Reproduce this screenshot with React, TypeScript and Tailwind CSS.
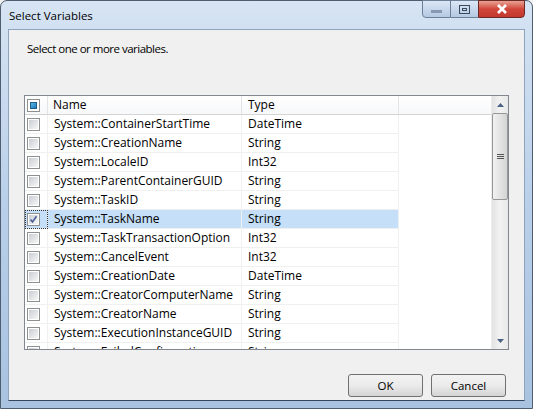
import React from 'react'

const ROWS: [string, string][] = [
  ['System::ContainerStartTime', 'DateTime'],
  ['System::CreationName', 'String'],
  ['System::LocaleID', 'Int32'],
  ['System::ParentContainerGUID', 'String'],
  ['System::TaskID', 'String'],
  ['System::TaskName', 'String'],
  ['System::TaskTransactionOption', 'Int32'],
  ['System::CancelEvent', 'Int32'],
  ['System::CreationDate', 'DateTime'],
  ['System::CreatorComputerName', 'String'],
  ['System::CreatorName', 'String'],
  ['System::ExecutionInstanceGUID', 'String'],
  ['System::FailedConfigurations', 'String'],
]

const FONT = { fontFamily: '"Open Sans", "Liberation Sans", Arial, sans-serif' }

function Check({ checked, mixed }: { checked?: boolean; mixed?: boolean }) {
  return (
    <div className="w-[13px] h-[13px] border border-[#8e8f8f] bg-white p-[1px] flex">
      {mixed ? (
        <div className="flex-1 border border-[#1d5f8a] bg-gradient-to-br from-[#5ab8e6] to-[#1b7ab8] m-[1px]" />
      ) : (
        <div className="flex-1 bg-gradient-to-br from-[#c9cdd3] to-[#f7f7f7] relative">
          {checked && (
            <svg viewBox="0 0 9 9" className="absolute inset-0 w-full h-full">
              <path d="M1.5 4.5 L3.5 7 L7.5 1.2" fill="none" stroke="#4a5f97" strokeWidth="1.6" />
            </svg>
          )}
        </div>
      )}
    </div>
  )
}

export default function App() {
  return (
    <div style={FONT} className="w-[533px] h-[409px] overflow-hidden bg-[#f0f0f0]">
      <div className="w-[533px] h-[409px] flex flex-col rounded-t-[7px] border border-[#4e5d70] bg-gradient-to-b from-[#d6e4f3] via-[#b9cfe9] to-[#a8c2e0] px-[7px] pb-[7px]">
        {/* title bar */}
        <div className="h-[28px] flex items-start justify-between">
          <div className="pt-[6px] pl-[1px] text-[11.5px] text-black">Select Variables</div>
          <div className="flex h-[18px] mt-[-1px]">
            <div className="w-[29px] h-full border border-[#6d7f96] rounded-bl-[4px] bg-gradient-to-b from-[#dbe7f5] to-[#b5c9e2] flex items-center justify-center">
              <div className="w-[11px] h-[3px] bg-[#8799b2] mt-[5px]" />
            </div>
            <div className="w-[27px] h-full border-y border-[#6d7f96] bg-gradient-to-b from-[#dbe7f5] to-[#b5c9e2] flex items-center justify-center">
              <div className="w-[11px] h-[9px] border border-[#3b4a5f] flex items-center justify-center">
                <div className="w-[5px] h-[3px] border border-[#3b4a5f]" />
              </div>
            </div>
            <div className="w-[47px] h-full border border-[#6d2a24] rounded-br-[4px] bg-gradient-to-b from-[#e8a093] via-[#d0463a] to-[#c3382c] flex items-center justify-center">
              <svg width="12" height="10" viewBox="0 0 12 10">
                <path d="M2 1 L10 9 M10 1 L2 9" stroke="#fff" strokeWidth="2.6" />
              </svg>
            </div>
          </div>
        </div>

        {/* client area */}
        <div className="flex-1 flex flex-col bg-[#f0f0f0] border border-[#8ea3bd] border-b-[#34475d]">
          <div className="h-[65px] pl-[18px] pt-[10px] text-[11.5px] tracking-[-0.5px] text-black">Select one or more variables.</div>
          <div className="ml-[15px] w-[485px] h-[255px] border border-[#828790] bg-white flex">
            <div className="flex-1 flex flex-col overflow-hidden">
              {/* header */}
              <div className="h-[19px] shrink-0 flex border-b border-[#d5d5d5] bg-gradient-to-b from-white to-[#f7f8fa] text-[12px] text-black">
                <div className="w-[23px] border-r border-[#e3e4e6] flex items-center pl-[2px]">
                  <Check mixed />
                </div>
                <div className="w-[194px] border-r border-[#e3e4e6] flex items-center pl-[5px]">Name</div>
                <div className="w-[157px] border-r border-[#e3e4e6] flex items-center pl-[6px]">Type</div>
              </div>
              {ROWS.map(([n, t], i) => {
                const sel = i === 5
                return (
                  <div key={n} className="h-[19px] shrink-0 flex text-[12px] text-black">
                    <div className={`w-[23px] border-r border-b border-[#f0f0f0] flex items-center pl-[2px] ${sel ? 'bg-[#c4dff7] outline outline-1 outline-dotted outline-[#333] outline-offset-[-1px]' : ''}`}>
                      <Check checked={sel} />
                    </div>
                    <div className={`w-[194px] border-r border-b border-[#f0f0f0] flex items-center pl-[6px] ${sel ? 'bg-[#c4dff7]' : ''}`}>{n}</div>
                    <div className={`w-[157px] border-r border-b border-[#f0f0f0] flex items-center pl-[6px] ${sel ? 'bg-[#c4dff7]' : ''}`}>{t}</div>
                  </div>
                )
              })}
            </div>
            {/* scrollbar */}
            <div className="w-[17px] flex flex-col bg-gradient-to-r from-[#e3e3e3] via-[#f2f2f2] to-[#e8e8e8] border-l border-[#ececec]">
              <div className="h-[17px] flex items-center justify-center">
                <svg width="7" height="4" viewBox="0 0 7 4"><path d="M0 4 L3.5 0 L7 4 Z" fill="#4d6185" /></svg>
              </div>
              <div className="h-[87px] border border-[#979797] rounded-[2px] bg-gradient-to-r from-[#f1f1f1] via-[#e3e3e3] to-[#d4d4d4] flex flex-col items-center justify-center gap-[1px]">
                <div className="w-[7px] h-[1px] bg-[#555]" />
                <div className="w-[7px] h-[1px] bg-[#555]" />
                <div className="w-[7px] h-[1px] bg-[#555]" />
              </div>
              <div className="flex-1" />
              <div className="h-[17px] flex items-center justify-center">
                <svg width="7" height="4" viewBox="0 0 7 4"><path d="M0 0 L3.5 4 L7 0 Z" fill="#4d6185" /></svg>
              </div>
            </div>
          </div>
          <div className="flex justify-end gap-[8px] pr-[18px] mt-[24px]">
            {['OK', 'Cancel'].map(b => (
              <div key={b} className="w-[75px] h-[23px] rounded-[3px] border border-[#707070] bg-gradient-to-b from-[#f2f2f2] via-[#ebebeb] to-[#d4d4d4] flex items-center justify-center text-[11.5px] text-black">
                {b}
              </div>
            ))}
          </div>
        </div>
      </div>
    </div>
  )
}
